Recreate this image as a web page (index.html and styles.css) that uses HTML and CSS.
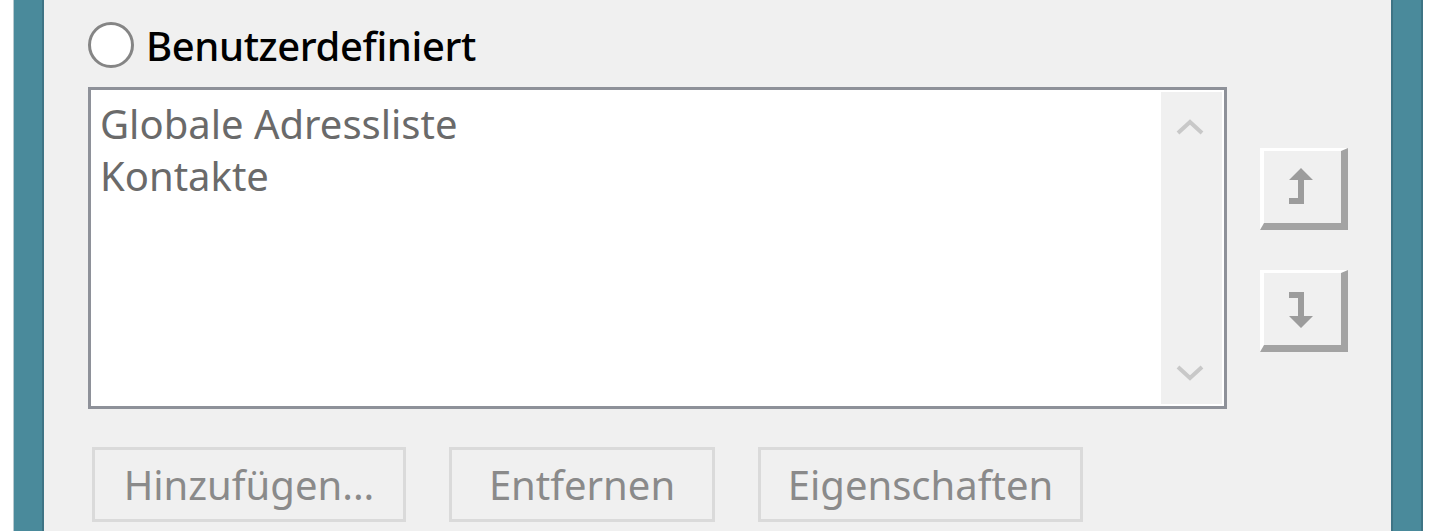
FILE: index.html
```html
<!DOCTYPE html>
<html lang="de">
<head>
<meta charset="utf-8">
<title>Adressbuch</title>
<link rel="stylesheet" href="styles.css">
</head>
<body>
<div class="window">
  <div class="bar bar-left"></div>
  <main class="pane">
    <label class="radio-row">
      <span class="radio"></span>
      <span class="radio-label">Benutzerdefiniert</span>
    </label>
    <div class="list-area">
      <div class="listbox">
        <ul class="items">
          <li>Globale Adressliste</li>
          <li>Kontakte</li>
        </ul>
        <div class="scroll">
          <svg class="chev" viewBox="0 0 30 18" width="30" height="18"><path d="M3 15 L15 4 L27 15" fill="none" stroke="#c8c8c8" stroke-width="4"/></svg>
          <svg class="chev" viewBox="0 0 30 18" width="30" height="18"><path d="M3 3 L15 14 L27 3" fill="none" stroke="#c8c8c8" stroke-width="4"/></svg>
        </div>
      </div>
      <div class="side">
        <div class="tool">
          <svg viewBox="0 0 30 40" width="30" height="40"><path d="M15 1 L27 13 L18 13 L18 37 L3 37 L3 31 L12 31 L12 13 L3 13 Z" fill="#9c9c9c"/></svg>
        </div>
        <div class="tool">
          <svg viewBox="0 0 30 40" width="30" height="40"><path d="M15 39 L27 27 L18 27 L18 3 L3 3 L3 9 L12 9 L12 27 L3 27 Z" fill="#9c9c9c"/></svg>
        </div>
      </div>
    </div>
    <div class="buttons">
      <div class="btn btn-add">Hinzufügen...</div>
      <div class="btn btn-del">Entfernen</div>
      <div class="btn btn-prop">Eigenschaften</div>
    </div>
  </main>
  <div class="bar bar-right"></div>
</div>
</body>
</html>
```
FILE: styles.css
```css
html, body {
  margin: 0;
  padding: 0;
  background: #ffffff;
}
body {
  font-family: "Noto Sans", "Open Sans", "DejaVu Sans", sans-serif;
  font-size: 40px;
}
.window {
  display: flex;
  height: 531px;
  padding-left: 13px;
  padding-right: 17px;
  box-sizing: border-box;
  background: #ffffff;
}
.bar {
  box-sizing: border-box;
  background: #4a8a9b;
}
.bar-left {
  width: 31px;
  border-left: 1px solid #b6c9cf;
  border-right: 2px solid #3e7485;
}
.bar-right {
  width: 32px;
  border-left: 2px solid #3e7485;
  border-right: 2px solid #3e7485;
}
.pane {
  flex: 1;
  background: #f0f0f0;
  padding: 22px 0 0 44px;
  box-sizing: border-box;
}
.radio-row {
  display: flex;
  align-items: center;
  gap: 12px;
  height: 46px;
}
.radio {
  width: 46px;
  height: 46px;
  box-sizing: border-box;
  border: 3px solid #858585;
  border-radius: 50%;
  background: #ffffff;
}
.radio-label {
  color: #000000;
  font-weight: 500;
  letter-spacing: -0.4px;
}
.list-area {
  display: flex;
  margin-top: 19px;
}
.listbox {
  width: 1139px;
  height: 322px;
  box-sizing: border-box;
  border: 3px solid #8e9199;
  background: #ffffff;
  display: flex;
}
.items {
  flex: 1;
  list-style: none;
  margin: 0;
  padding: 8px 0 0 9px;
  color: #6a6a6a;
  line-height: 52px;
}
.scroll {
  width: 61px;
  margin: 2px 2px 2px 0;
  background: #f0f0f0;
  display: flex;
  flex-direction: column;
  justify-content: space-between;
  align-items: center;
  padding: 26px 4px 22px 0;
  box-sizing: border-box;
}
.chev {
  display: block;
}
.side {
  display: flex;
  flex-direction: column;
  gap: 40px;
  margin-left: 33px;
  padding-top: 61px;
}
.tool {
  width: 88px;
  height: 82px;
  box-sizing: border-box;
  background: #f0f0f0;
  border-top: 3px solid #ffffff;
  border-left: 4px solid #ffffff;
  border-right: 7px solid #a3a3a3;
  border-bottom: 7px solid #a3a3a3;
  display: flex;
  align-items: center;
  justify-content: center;
  padding-right: 4px;
}
.buttons {
  display: flex;
  gap: 43px;
  margin-top: 38px;
  padding-left: 4px;
}
.btn {
  height: 75px;
  box-sizing: border-box;
  border: 3px solid #dadada;
  background: #f0f0f0;
  color: #8a8a8a;
  display: flex;
  align-items: center;
  justify-content: center;
}
.btn-add { width: 314px; }
.btn-del { width: 266px; }
.btn-prop { width: 325px; }
```
